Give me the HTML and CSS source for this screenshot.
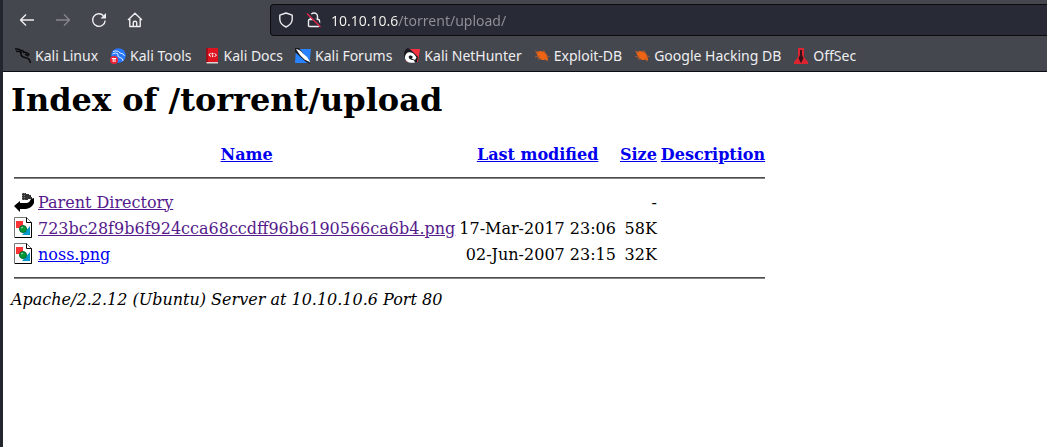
FILE: index.html
```html
<!DOCTYPE html>
<html lang="en">
<head>
<meta charset="utf-8">
<title>Index of /torrent/upload</title>
<link rel="stylesheet" href="styles.css">
</head>
<body>
<div class="window">
  <header class="chrome">
    <div class="toolbar">
      <nav class="nav-buttons" aria-label="Navigation">
        <button class="nav-button" type="button" aria-label="Back"><svg viewBox="0 0 16 16"><path d="M15 8H1.500M7 2.500L1.500 8L7 13.500"/></svg></button>
        <button class="nav-button" type="button" aria-label="Forward" disabled><svg viewBox="0 0 16 16"><path d="M1 8H14.500M9 2.500L14.500 8L9 13.500"/></svg></button>
        <button class="nav-button" type="button" aria-label="Reload"><svg viewBox="0 0 16 16"><path d="M14.200 8.500A6.300 6.300 0 1 1 12.500 3.700"/><path class="fill" d="M15 1V6.500H9.500Z"/></svg></button>
        <button class="nav-button" type="button" aria-label="Home"><svg viewBox="0 0 16 16"><path d="M1 8L8 1.200L15 8M2.800 7V14.500H13.200V7M6.300 14.500V10.500Q6.300 9.200 8 9.200T9.700 10.500V14.500"/></svg></button>
      </nav>
      <div class="address">
        <svg class="address-icon" viewBox="0 0 16 16"><path d="M8 1L14.200 3.200V7.500Q13.800 12.500 8 15Q2.200 12.500 1.800 7.500V3.200Z"/></svg>
        <svg class="address-icon" viewBox="0 0 16 16"><path d="M4.500 7V4.500A3.500 3.500 0 0 1 11.500 4.500V7M3.500 7.500H12.500Q13.500 7.500 13.500 8.500V13.500Q13.500 14.500 12.500 14.500H3.500Q2.500 14.500 2.500 13.500V8.500Q2.500 7.500 3.500 7.500Z"/><path class="gap" d="M2 1L15 14"/><path class="slash" d="M1 1.500L14.500 15"/></svg>
        <input class="url" type="text" aria-label="Address" value="10.10.10.6/torrent/upload/">
      </div>
    </div>
    <nav class="bookmarks" aria-label="Bookmarks">
      <a class="bookmark" href="#"><svg viewBox="0 0 16 16"><path d="M0 1Q4 .500 6 2.500Q8 2 9 4M1 3.500Q5 2.500 7 5M6 4Q5 7.500 8 9C11 10 15 9.500 15.300 15M8 4.500Q12 3.500 14.500 7M10 6L13.500 8" fill="none" stroke="#0a0a0c" stroke-width="1.500"/></svg>Kali Linux</a>
      <a class="bookmark" href="#"><svg viewBox="0 0 16 16"><circle cx="8.500" cy="7.500" r="7.300" fill="#2777ff"/><path d="M3 3.500Q8 2 10 5Q13.500 5 14.500 8M2.500 6Q6 4 8 6Q7 9 10 9.500Q13 10 13 13" fill="none" stroke="#dcecff" stroke-width="1"/><circle cx="4" cy="12" r="4" fill="#ed2236"/><path d="M1.800 10.500H6.200M3.200 10.500V14M5 10.500V14" fill="none" stroke="#fff"/></svg>Kali Tools</a>
      <a class="bookmark" href="#"><svg viewBox="0 0 16 16"><path d="M2 0H14V15H2Z" fill="#e01420"/><path d="M2 0H4V15H2Z" fill="#99101a"/><path d="M2.500 14H14V15.500H2.500Z" fill="#d9d5d3"/><path d="M6.500 5L4.800 7L7 8.500M10.500 5.500L12.500 7L10.500 9M9.500 5.500Q7 4.500 8 6.700Q10.500 8 8 9" fill="none" stroke="#fff" stroke-width="1"/></svg>Kali Docs</a>
      <a class="bookmark" href="#"><svg viewBox="0 0 16 16"><path d="M1 1H16L14.500 15H0Z" fill="#2783ff"/><path d="M0 0H4L14 13L15.500 16L11 14L0 4Z" fill="#17191f"/><path d="M1 1Q5 1.500 7.500 5L12 9L15.500 14.500L9.500 11.500L5 7Z" fill="#fff"/></svg>Kali Forums</a>
      <a class="bookmark" href="#"><svg viewBox="0 0 16 16"><path d="M3 1H16L14 14H2Z" fill="#f5323d"/><path d="M0 8Q0 1 4 0L7 2L14 9L13 14H3Z" fill="#17191f"/><path d="M1 10C1 2.500 9 2.500 12.500 9.500L11 12L7.500 10.500L9 9C6 6 4 8 5 10Q6 12 10 12.200L11 14.500C5 15.500 1.500 14 1 10Z" fill="#fff"/></svg>Kali NetHunter</a>
      <a class="bookmark" href="#"><svg viewBox="0 0 16 16"><path d="M2 4L6 3L10 4L13 7L14 12L8 12L4 9Z" fill="#ee6413"/><path d="M1 3L5 5M1 9L5 8L4 11H7M8 4L10 2.500L12 6M12 8L15.500 8.500M10 11L14 13" fill="none" stroke="#a95a32" stroke-width="1"/></svg>Exploit-DB</a>
      <a class="bookmark" href="#"><svg viewBox="0 0 16 16"><path d="M2 4L6 3L10 4L13 7L14 12L8 12L4 9Z" fill="#ee6413"/><path d="M1 3L5 5M1 9L5 8L4 11H7M8 4L10 2.500L12 6M12 8L15.500 8.500M10 11L14 13" fill="none" stroke="#a95a32" stroke-width="1"/></svg>Google Hacking DB</a>
      <a class="bookmark" href="#"><svg viewBox="0 0 16 16"><path d="M5 0H11V9L15 14V16H1V14L5 9Z" fill="#dc2530"/><path d="M7 2H9V7L10.500 10L8.500 14.500H7.500L5.500 10L7 7Z" fill="#35131b"/></svg>OffSec</a>
    </nav>
  </header>
  <main class="page">
    <h1 class="title">Index of /torrent/upload</h1>
    <table class="listing">
      <thead>
        <tr class="head"><th></th><th><a href="#">Name</a></th><th><a href="#">Last modified</a></th><th><a href="#">Size</a></th><th><a href="#">Description</a></th></tr>
        <tr><th colspan="5"><hr></th></tr>
      </thead>
      <tbody>
        <tr>
          <td><svg class="file-icon" viewBox="0 0 20 22"><path d="M8 2H12V3H15V4H17V6H18V8H14V9H8Z" fill="#333"/><path d="M8.500 2V9M10.500 2V9" stroke="#777" stroke-dasharray="1 1"/><path d="M0 15L6 10V12H13Q16 11 17 8L20 7V12Q18 17 12 18H6V21Z" fill="#000"/></svg></td>
          <td><a class="visited" href="#">Parent Directory</a></td><td></td><td class="num">-</td><td></td>
        </tr>
        <tr>
          <td><svg class="file-icon" viewBox="0 0 20 22"><path d="M.500 .500H12.500L17.500 5.500V20.500H.500Z" fill="#fff" stroke="#777"/><path d="M12.500 .500V5.500H17.500V20.500H1" fill="none" stroke="#000"/><path d="M2 4H9V11H2Z" fill="#ff3333"/><path d="M16 9V18H8Z" fill="#0099cc"/><circle cx="9" cy="12" r="3.500" fill="#009933" stroke="#063"/><path d="M7 11L9 10" stroke="#b5e6bd"/></svg></td>
          <td><a class="visited" href="#">723bc28f9b6f924cca68ccdff96b6190566ca6b4.png</a></td><td class="num">17-Mar-2017 23:06</td><td class="num">58K</td><td></td>
        </tr>
        <tr>
          <td><svg class="file-icon" viewBox="0 0 20 22"><path d="M.500 .500H12.500L17.500 5.500V20.500H.500Z" fill="#fff" stroke="#777"/><path d="M12.500 .500V5.500H17.500V20.500H1" fill="none" stroke="#000"/><path d="M2 4H9V11H2Z" fill="#ff3333"/><path d="M16 9V18H8Z" fill="#0099cc"/><circle cx="9" cy="12" r="3.500" fill="#009933" stroke="#063"/><path d="M7 11L9 10" stroke="#b5e6bd"/></svg></td>
          <td><a href="#">noss.png</a></td><td class="num">02-Jun-2007 23:15</td><td class="num">32K</td><td></td>
        </tr>
      </tbody>
      <tfoot>
        <tr><th colspan="5"><hr></th></tr>
      </tfoot>
    </table>
    <address class="server">Apache/2.2.12 (Ubuntu) Server at 10.10.10.6 Port 80</address>
  </main>
</div>
</body>
</html>
```
FILE: styles.css
```css
* { box-sizing: border-box; }

body {
  margin: 0;
  background: #fff;
  color: #000;
  font: 16px "DejaVu Serif", serif;
}

.window {
  min-height: 100vh;
  border-left: 3px solid #23252f;
}

.chrome {
  background: #44474e;
  border-bottom: 1px solid #0c0c14;
  color: #eeeef0;
  font-family: "Noto Sans", sans-serif;
  font-size: 14px;
}

.toolbar {
  display: flex;
  align-items: center;
  gap: 125px;
  height: 40px;
  padding-left: 14px;
}

.nav-buttons { display: flex; gap: 16px; }

.nav-button {
  display: flex;
  padding: 2px;
  border: 0;
  background: none;
  color: inherit;
}
.nav-button:disabled { color: #85878c; }
.nav-button svg,
.address-icon {
  width: 16px;
  height: 16px;
  fill: none;
  stroke: currentColor;
  stroke-width: 1.4;
  stroke-linejoin: round;
}
.nav-button .fill { fill: currentColor; stroke: none; }

.address {
  display: flex;
  flex: 1;
  align-items: center;
  gap: 12px;
  height: 32px;
  padding-left: 7px;
  border: 1px solid #0c0c0d;
  border-right: 0;
  border-radius: 4px 0 0 4px;
  background: #282a36;
}
.address-icon { flex: none; }
.address-icon .gap { stroke: #282a36; stroke-width: 3; }
.address-icon .slash { stroke: #e22850; }

.url {
  flex: 1;
  min-width: 0;
  margin-left: -3px;
  padding: 0;
  border: 0;
  outline: 0;
  color: #f8f8f2;
  background: linear-gradient(to right, #f8f8f2 67px, #909198 67px);
  background-clip: text;
  -webkit-text-fill-color: transparent;
  font-family: inherit;
  font-size: 14px;
}

.bookmarks {
  display: flex;
  align-items: center;
  gap: 12px;
  height: 31px;
  padding-left: 12px;
}
.bookmark {
  display: flex;
  align-items: center;
  gap: 4px;
  color: inherit;
  text-decoration: none;
  white-space: nowrap;
}
.bookmark svg { width: 16px; height: 16px; }

.page { padding: 8px; }

.title { margin: 0 0 22px; font-size: 32px; line-height: 40px; }

.listing { border-spacing: 2px; border-collapse: separate; }
.listing th,
.listing td { padding: 1px; white-space: nowrap; }
.listing .head th { padding-bottom: 2px; }
.listing a { color: #0000ee; }
.listing .visited { color: #551a8b; }
.num { text-align: right; }
.file-icon { display: block; width: 20px; height: 22px; }

hr {
  margin: 8px 0;
  border: 0;
  border-top: 1px solid #4d4d4d;
  border-bottom: 1px solid #858585;
}

.server { font-style: italic; }
```
